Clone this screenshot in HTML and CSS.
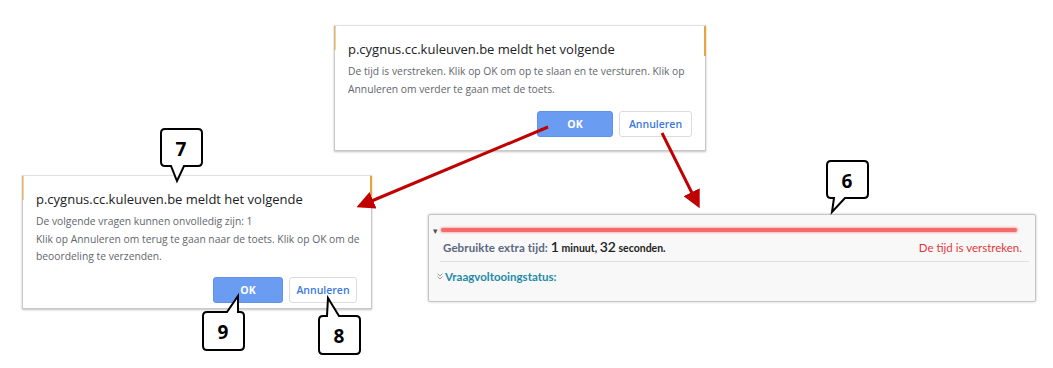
FILE: index.html
```html
<!DOCTYPE html>
<html lang="nl">
<head>
    <meta charset="UTF-8">
    <title>Toets - tijd verstreken</title>
    <link rel="stylesheet" href="styles.css">
</head>
<body>
    <div class="canvas">
        <!-- dialoog bovenaan -->
        <div class="dialog dialog-top">
            <div class="dialog-title">p.cygnus.cc.kuleuven.be meldt het volgende</div>
            <div class="dialog-text">De tijd is verstreken. Klik op OK om op te slaan en te versturen. Klik op Annuleren om verder te gaan met de toets.</div>
            <div class="dialog-buttons">
                <button class="btn-ok">OK</button>
                <button class="btn-cancel">Annuleren</button>
            </div>
        </div>

        <!-- dialoog links -->
        <div class="dialog dialog-left">
            <div class="dialog-title">p.cygnus.cc.kuleuven.be meldt het volgende</div>
            <div class="dialog-text">De volgende vragen kunnen onvolledig zijn: 1<br>Klik op Annuleren om terug te gaan naar de toets. Klik op OK om de beoordeling te verzenden.</div>
            <div class="dialog-buttons">
                <button class="btn-ok">OK</button>
                <button class="btn-cancel">Annuleren</button>
            </div>
        </div>

        <!-- timer paneel -->
        <div class="panel">
            <div class="timer-row">
                <span class="caret">&#9662;</span>
                <div class="timer-bar"></div>
            </div>
            <div class="info-row">
                <span class="label">Gebruikte extra tijd:</span>
                <span class="value"><b>1</b> minuut, <b>32</b> seconden.</span>
                <span class="expired">De tijd is verstreken.</span>
            </div>
            <div class="status-row">
                <svg class="chev" width="6" height="7" viewBox="0 0 6 7">
                    <path d="M0.5,0.5 L3,3 L5.5,0.5 M0.5,3.5 L3,6 L5.5,3.5" fill="none" stroke="#9a9a9a" stroke-width="1"/>
                </svg>
                <span class="status">Vraagvoltooingstatus:</span>
            </div>
        </div>

        <!-- pijlen -->
        <svg class="arrows" width="1053" height="368" viewBox="0 0 1053 368">
            <defs>
                <marker id="head" markerWidth="6" markerHeight="6" refX="4" refY="3" orient="auto" markerUnits="strokeWidth">
                    <path d="M0,0 L6,3 L0,6 Z" fill="#c00000"/>
                </marker>
            </defs>
            <line x1="548" y1="127" x2="362" y2="205" stroke="#c00000" stroke-width="3" marker-end="url(#head)"/>
            <line x1="662" y1="133" x2="697" y2="203" stroke="#c00000" stroke-width="3" marker-end="url(#head)"/>
        </svg>

        <!-- nummers -->
        <svg class="callout c7" width="50" height="60" viewBox="0 0 50 60">
            <path d="M6,2 H39 Q43,2 43,6 V35 Q43,39 39,39 H25 L18,54 L12,39 H6 Q2,39 2,35 V6 Q2,2 6,2 Z" fill="#fff" stroke="#000" stroke-width="2"/>
            <text x="22" y="29" text-anchor="middle">7</text>
        </svg>
        <svg class="callout c9" width="50" height="62" viewBox="0 0 50 62">
            <path d="M6,20 H26 L37,4 L37,20 H39 Q43,20 43,24 V54 Q43,58 39,58 H6 Q2,58 2,54 V24 Q2,20 6,20 Z" fill="#fff" stroke="#000" stroke-width="2"/>
            <text x="22" y="47" text-anchor="middle">9</text>
        </svg>
        <svg class="callout c8" width="50" height="62" viewBox="0 0 50 62">
            <path d="M6,22 H10 L11,4 L22,22 H39 Q43,22 43,26 V56 Q43,60 39,60 H6 Q2,60 2,56 V26 Q2,22 6,22 Z" fill="#fff" stroke="#000" stroke-width="2"/>
            <text x="22" y="49" text-anchor="middle">8</text>
        </svg>
        <svg class="callout c6" width="50" height="60" viewBox="0 0 50 60">
            <path d="M6,2 H39 Q43,2 43,6 V35 Q43,39 39,39 H20 L7,53 L9,39 H6 Q2,39 2,35 V6 Q2,2 6,2 Z" fill="#fff" stroke="#000" stroke-width="2"/>
            <text x="22" y="29" text-anchor="middle">6</text>
        </svg>
    </div>
</body>
</html>
```

FILE: styles.css
```css
body {
    margin: 0;
    background-color: #fff;
    font-family: "Open Sans", "Noto Sans", sans-serif;
}
.canvas {
    position: relative;
    width: 1053px;
    height: 368px;
    overflow: hidden;
}
.dialog {
    position: absolute;
    box-sizing: border-box;
    background-color: #fff;
    border: 1px solid #c8c8c8;
    border-top-color: #e2e2e2;
    box-shadow: 0 1px 2px rgba(0,0,0,0.25);
    padding: 0 13px;
}
.dialog::before,
.dialog::after {
    content: "";
    position: absolute;
    top: 0;
    width: 2px;
    height: 24px;
    background-color: #e2a63a;
}
.dialog::before { left: -1px; opacity: 0.5; }
.dialog::after { right: -1px; height: 30px; }
.dialog-top {
    left: 334px;
    top: 25px;
    width: 372px;
    height: 126px;
    padding-top: 14px;
}
.dialog-left {
    left: 22px;
    top: 175px;
    width: 350px;
    height: 134px;
    padding-top: 14px;
}
.dialog-title {
    font-size: 13px;
    color: #202124;
    line-height: 18px;
    margin-bottom: 5px;
}
.dialog-text {
    font-size: 10.3px;
    color: #62666b;
    line-height: 17.5px;
}
.dialog-top .dialog-text { margin-right: -6px; }
.dialog-left .dialog-text { margin-right: -8px; }
.dialog-buttons {
    display: flex;
    justify-content: flex-end;
    gap: 6px;
    margin-top: 13px;
}
.dialog-left .dialog-buttons {
    margin-top: 11px;
    padding-right: 1px;
}
.btn-ok,
.btn-cancel {
    height: 26px;
    border-radius: 3px;
    font-family: inherit;
    font-size: 10.5px;
    font-weight: bold;
    padding: 0;
}
.btn-ok {
    width: 76px;
    background-color: #6a9cf2;
    color: #fff;
    border: 1px solid #5f92ea;
}
.btn-cancel {
    width: 73px;
    background-color: #fff;
    color: #3b78e0;
    border: 1px solid #dcdcdc;
    font-weight: 600;
}
.dialog-left .btn-ok { width: 70px; }
.dialog-left .btn-cancel { width: 68px; }

.panel {
    position: absolute;
    left: 428px;
    top: 214px;
    width: 608px;
    height: 88px;
    box-sizing: border-box;
    background-color: #f8f8f8;
    border: 1px solid #c4c4c4;
    border-radius: 2px;
    box-shadow: 0 0 3px rgba(0,0,0,0.2);
    font-family: Lato, "Liberation Sans", sans-serif;
    padding: 9px 0 0 4px;
}
.timer-row {
    display: flex;
    align-items: center;
    gap: 3px;
    height: 12px;
}
.caret {
    font-size: 9px;
    color: #555;
    line-height: 9px;
}
.timer-bar {
    width: 576px;
    height: 4px;
    background-color: #f46b6b;
    border-radius: 3px;
    box-shadow: 0 0 2px 1px rgba(244,107,107,0.45);
}
.info-row {
    display: flex;
    align-items: baseline;
    margin: 2px 6px 0 7px;
    padding: 0 0 6px 3px;
    border-bottom: 1px solid #e0e0e0;
    font-size: 11.5px;
}
.label {
    color: #5b6780;
    font-weight: bold;
    margin-right: 3px;
    letter-spacing: 0.1px;
}
.value {
    color: #222;
    font-weight: bold;
    font-size: 10.5px;
}
.value b {
    font-size: 14px;
    font-weight: 600;
}
.expired {
    margin-left: auto;
    color: #e0393a;
    font-size: 11.5px;
    padding-right: 7px;
}
.status-row {
    display: flex;
    align-items: center;
    gap: 2px;
    margin-top: 8px;
    padding-left: 4px;
}
.status {
    color: #1f8aa8;
    font-size: 11.5px;
    font-weight: bold;
}

.arrows {
    position: absolute;
    left: 0;
    top: 0;
    pointer-events: none;
}
.callout {
    position: absolute;
    overflow: visible;
}
.callout text {
    font-family: "Open Sans", "Liberation Sans", sans-serif;
    font-weight: bold;
    font-size: 19px;
    fill: #000;
}
.c7 { left: 159px; top: 127px; }
.c9 { left: 201px; top: 292px; }
.c8 { left: 317px; top: 294px; }
.c6 { left: 825px; top: 159px; }
```
